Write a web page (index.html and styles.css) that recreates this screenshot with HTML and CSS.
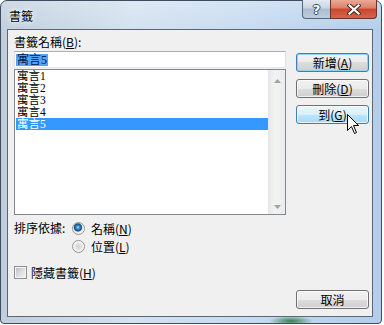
FILE: index.html
```html
<!DOCTYPE html>
<html lang="zh-Hant">
<head>
  <meta charset="UTF-8">
  <title>書籤</title>
  <link rel="stylesheet" href="styles.css">
</head>
<body>

  <div class="window">
    <div class="titlebar">
      <span class="title">書籤</span>
      <div class="caption-buttons">
        <span class="cap-btn help">?</span>
        <span class="cap-btn close">
          <svg width="14" height="11" viewBox="0 0 14 11">
            <path d="M2.5 1.5 L11.5 9.5 M11.5 1.5 L2.5 9.5" stroke="#3b2a28" stroke-width="4.2" stroke-linecap="square"/>
            <path d="M2.5 1.5 L11.5 9.5 M11.5 1.5 L2.5 9.5" stroke="#fff" stroke-width="2.2" stroke-linecap="square"/>
          </svg>
        </span>
      </div>
    </div>

    <div class="client">
      <div class="main-col">
        <div class="field-label">書籤名稱(<u>B</u>):</div>
        <div class="textbox"><span class="sel">寓言5</span></div>
        <div class="listbox">
          <ul class="items">
            <li>寓言1</li>
            <li>寓言2</li>
            <li>寓言3</li>
            <li>寓言4</li>
            <li class="selected">寓言5</li>
          </ul>
          <div class="scrollbar">
            <svg width="7" height="4" viewBox="0 0 7 4"><path d="M3.5 0 L7 4 H0 Z" fill="#a2a2a2"/></svg>
            <svg width="7" height="4" viewBox="0 0 7 4"><path d="M0 0 H7 L3.5 4 Z" fill="#a2a2a2"/></svg>
          </div>
        </div>

        <div class="sort">
          <span class="sort-label">排序依據:</span>
          <div class="radios">
            <label class="radio"><span class="radio-dot checked"></span><span>名稱(<u>N</u>)</span></label>
            <label class="radio"><span class="radio-dot"></span><span>位置(<u>L</u>)</span></label>
          </div>
        </div>

        <label class="check"><span class="box"></span><span>隱藏書籤(<u>H</u>)</span></label>
      </div>

      <div class="side-col">
        <button class="btn default">新增(<u>A</u>)</button>
        <button class="btn">刪除(<u>D</u>)</button>
        <button class="btn hover">到(<u>G</u>)</button>
        <button class="btn cancel">取消</button>
      </div>

      <svg class="cursor" width="13" height="21" viewBox="0 0 13 21">
        <path d="M0.5 0.5 L0.5 16.5 L4.5 12.5 L7.5 19.5 L9.5 18.5 L6.5 11.5 L11.5 11.5 Z" fill="#fff" stroke="#000" stroke-width="1"/>
      </svg>
    </div>
  </div>

</body>
</html>
```

FILE: styles.css
```css
* {
  box-sizing: border-box;
}
body {
  margin: 0;
  background: #fff;
  color: #000;
  font-family: "Noto Sans CJK TC", "Noto Sans", sans-serif;
  font-size: 12px;
}
u {
  text-decoration: underline;
  text-underline-offset: 1px;
}

/* window frame */
.window {
  width: 382px;
  height: 324px;
  border: 1px solid #3e4d5e;
  border-radius: 7px 7px 4px 4px;
  background:
    radial-gradient(ellipse 22px 5px at 290px 320px, rgba(36, 118, 58, 0.9), rgba(36, 118, 58, 0)),
    linear-gradient(180deg, rgba(255, 255, 255, 0.25), rgba(255, 255, 255, 0) 30px),
    linear-gradient(90deg, #c0cedd 0%, #d3e1f0 35%, #c6dbf1 65%, #b3cdea 100%);
  display: flex;
  flex-direction: column;
}
.titlebar {
  height: 28px;
  display: flex;
  justify-content: space-between;
  align-items: flex-start;
  padding-left: 8px;
}
.title {
  line-height: 29px;
  font-size: 12px;
  text-shadow: 0 0 6px #fff, 0 0 3px #fff;
}
.caption-buttons {
  display: flex;
  margin-top: -1px;
  margin-right: 4px;
}
.cap-btn {
  height: 19px;
  display: flex;
  align-items: center;
  justify-content: center;
  border: 1px solid #56677b;
  border-top: none;
}
.help {
  width: 28px;
  border-right: none;
  border-radius: 0 0 0 4px;
  background: linear-gradient(180deg, #e3eaf2 0%, #c9d5e2 45%, #aebdce 50%, #bccddd 100%);
  color: #fff;
  font-family: "DejaVu Sans", sans-serif;
  font-weight: bold;
  font-size: 13px;
  text-shadow: 1px 0 0 #3a4654, -1px 0 0 #3a4654, 0 1px 0 #3a4654, 0 -1px 0 #3a4654;
}
.close {
  width: 47px;
  border-color: #6a3328;
  border-radius: 0 0 4px 0;
  background: linear-gradient(180deg, #eba896 0%, #dc806a 45%, #c7472e 50%, #d8644a 100%);
}

/* client area */
.client {
  position: relative;
  height: 288px;
  margin: 0 8px 0 6px;
  border: 1px solid #5b6773;
  background: #f0f0f0;
  display: flex;
  gap: 10px;
  padding: 6px 3px 7px 6px;
}
.main-col {
  width: 272px;
  display: flex;
  flex-direction: column;
}
.field-label {
  line-height: 12px;
  height: 12px;
}
.textbox {
  margin-top: 3px;
  height: 17px;
  border: 1px solid;
  border-color: #abadb3 #dbdfe6 #e3e9ef #e2e3ea;
  background: #fff;
  padding: 1px 0 0 1px;
  font-family: "Liberation Serif", "Noto Sans CJK TC", serif;
}
.sel {
  display: inline-block;
  line-height: 12px;
  padding: 0 1px;
  background: #55a4f4;
  color: #001a44;
}
.listbox {
  margin-top: 1px;
  height: 146px;
  border: 1px solid #828790;
  background: #fff;
  display: flex;
}
.items {
  flex: 1;
  list-style: none;
  margin: 0;
  padding: 0 0 0 1px;
  font-family: "Liberation Serif", "Noto Sans CJK TC", serif;
  font-size: 11.5px;
}
.items li {
  line-height: 12px;
  height: 12px;
  padding-left: 1px;
}
.items .selected {
  background: #3399ff;
  color: #fff;
}
.scrollbar {
  width: 17px;
  border-left: 1px solid #e6e6e6;
  background: linear-gradient(90deg, #e9e9e9 0%, #f3f3f3 40%, #ececec 100%);
  display: flex;
  flex-direction: column;
  justify-content: space-between;
  align-items: center;
  padding: 9px 0 5px;
}

/* sort options */
.sort {
  margin-top: 4px;
  display: flex;
}
.sort-label {
  width: 58px;
  line-height: 18px;
}
.radios {
  display: flex;
  flex-direction: column;
}
.radio,
.check {
  display: flex;
  align-items: center;
  height: 18px;
  gap: 6px;
}
.radio-dot {
  width: 13px;
  height: 13px;
  border-radius: 50%;
  border: 1px solid #959595;
  background: radial-gradient(circle at 50% 50%, #d2d2d2 0, #e4e4e4 3px, #f6f6f6 5px);
}
.radio-dot.checked {
  background: radial-gradient(circle at 45% 40%, #a6dcfb 0, #3d94d8 1.6px, #0f4f8e 3.4px, #5d7994 4px, #e6e6e6 4.6px, #f7f7f7 6px);
}
.check {
  margin-top: 8px;
  gap: 4px;
}
.box {
  width: 13px;
  height: 13px;
  border: 1px solid #8e8f8f;
  background: linear-gradient(135deg, #b4b9bf 0%, #e2e3e5 60%, #f0f0f0 100%);
  box-shadow: inset 0 0 0 1px #f4f4f4;
}

/* buttons */
.side-col {
  width: 73px;
  display: flex;
  flex-direction: column;
  gap: 7px;
  padding-top: 17px;
}
.btn {
  height: 19px;
  width: 73px;
  padding: 0;
  border: 1px solid #707070;
  border-radius: 3px;
  background: linear-gradient(180deg, #f2f2f2 0%, #ebebeb 50%, #dddddd 50%, #cfcfcf 100%);
  box-shadow: inset 0 0 0 1px rgba(255, 255, 255, 0.7);
  font: inherit;
  line-height: 17px;
  color: #000;
}
.btn.default {
  border-color: #3c7fb1;
  box-shadow: inset 0 0 0 1px #8fd2f2;
}
.btn.hover {
  border-color: #3c7fb1;
  background: linear-gradient(180deg, #eaf6fd 0%, #d9f0fc 50%, #bee6fd 50%, #a7d9f5 100%);
}
.btn.cancel {
  margin-top: auto;
}

.cursor {
  position: absolute;
  left: 339px;
  top: 84px;
}
```
